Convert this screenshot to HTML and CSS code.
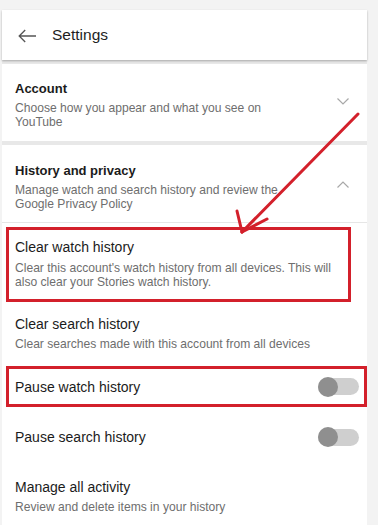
FILE: index.html
```html
<!DOCTYPE html>
<html lang="en">
<head>
<meta charset="utf-8">
<title>Settings</title>
<link rel="stylesheet" href="styles.css">
</head>
<body>
<div class="column">
  <header class="card topbar">
    <svg class="back" width="18" height="14" viewBox="0 0 18 14"><path d="M18 7H1.2M7.2 1L1.2 7l6 6" fill="none" stroke="#555" stroke-width="1.3"/></svg>
    <span class="page-title">Settings</span>
  </header>

  <section class="card group account">
    <div class="group-text">
      <div class="group-title">Account</div>
      <div class="desc">Choose how you appear and what you see on YouTube</div>
    </div>
    <svg class="chev down" width="12" height="7" viewBox="0 0 12 7"><polyline points="0.5,0.5 6,6 11.5,0.5" fill="none" stroke="#a8a8a8" stroke-width="1.2"/></svg>
  </section>

  <section class="card history">
    <div class="group history-head">
      <div class="group-text">
        <div class="group-title">History and privacy</div>
        <div class="desc">Manage watch and search history and review the Google Privacy Policy</div>
      </div>
      <svg class="chev up" width="12" height="7" viewBox="0 0 12 7"><polyline points="0.5,6.5 6,1 11.5,6.5" fill="none" stroke="#a8a8a8" stroke-width="1.2"/></svg>
    </div>

    <div class="item boxed box-clear">
      <div class="item-title">Clear watch history</div>
      <div class="desc item-desc">Clear this account's watch history from all devices. This will also clear your Stories watch history.</div>
    </div>

    <div class="item plain search-item">
      <div class="item-title">Clear search history</div>
      <div class="desc item-desc short">Clear searches made with this account from all devices</div>
    </div>

    <div class="item boxed toggle-row box-pause">
      <div class="item-title">Pause watch history</div>
      <span class="switch"><span class="knob"></span></span>
    </div>

    <div class="item toggle-row plain-toggle">
      <div class="item-title">Pause search history</div>
      <span class="switch"><span class="knob"></span></span>
    </div>

    <div class="item plain manage-item">
      <div class="item-title">Manage all activity</div>
      <div class="desc item-desc short">Review and delete items in your history</div>
    </div>
  </section>
</div>

<svg class="annotation" width="378" height="525" viewBox="0 0 378 525">
  <g fill="none" stroke="#d3202b" stroke-width="3" stroke-linecap="round">
    <line x1="358" y1="114" x2="242" y2="232"/>
    <line x1="242" y1="232" x2="237" y2="211"/>
    <line x1="242" y1="232" x2="267" y2="219"/>
  </g>
</svg>
</body>
</html>
```

FILE: styles.css
```css
* { box-sizing: border-box; }

html, body {
  margin: 0;
  padding: 0;
}

body {
  background: #f3f3f3;
  font-family: "Liberation Sans", Arial, sans-serif;
  color: #1b1b1b;
  width: 378px;
  height: 525px;
  overflow: hidden;
  position: relative;
}

.column {
  margin: 10px 0 0 2px;
  width: 365px;
  min-height: 515px;
  background: #e8e8e8;
  display: flex;
  flex-direction: column;
  gap: 4px;
}

.card {
  background: #ffffff;
}

.topbar {
  height: 50px;
  display: flex;
  align-items: center;
  padding-left: 16px;
  gap: 16px;
  box-shadow: 0 1px 2px rgba(0, 0, 0, 0.28);
  position: relative;
  z-index: 1;
}

.back {
  display: block;
  margin-top: 1px;
}

.page-title {
  font-size: 15.5px;
  color: #1e1e1e;
  line-height: 18px;
}

.group {
  display: flex;
  align-items: center;
  padding-left: 13px;
  padding-right: 18px;
}

.account {
  height: 77px;
  padding-top: 5px;
}

.group-text {
  flex: 1;
}

.group-title {
  font-size: 13px;
  font-weight: bold;
  line-height: 16px;
  color: #1b1b1b;
}

.desc {
  font-size: 12.1px;
  line-height: 14px;
  color: #6e6e6e;
  margin-top: 4px;
  max-width: 280px;
}

.chev {
  display: block;
  align-self: flex-start;
}

.chev.down {
  margin-top: 29px;
}

.chev.up {
  margin-top: 30px;
}

.history {
  flex: 1;
}

.history-head {
  height: 78px;
  padding-top: 6px;
  border-bottom: 1px solid #e6e6e6;
}

.item-title {
  font-size: 14px;
  line-height: 16px;
  color: #1b1b1b;
}

.item-desc {
  max-width: 330px;
  margin-top: 6px;
}

.item-desc.short {
  margin-top: 5px;
}

.boxed {
  border: 3px solid #d3202b;
  margin-left: 4px;
  padding-left: 6px;
}

.box-clear {
  margin-top: 4px;
  margin-right: 16px;
  padding-top: 9px;
  padding-bottom: 10px;
}

.plain {
  padding-left: 13px;
}

.search-item {
  padding-top: 14px;
}

.toggle-row {
  display: flex;
  align-items: center;
  justify-content: space-between;
}

.box-pause {
  margin-top: 15px;
  height: 41px;
  padding-right: 5px;
}

.plain-toggle {
  margin-top: 12px;
  height: 36px;
  padding-left: 13px;
  padding-right: 8px;
}

.manage-item {
  padding-top: 24px;
}

.switch {
  position: relative;
  width: 41px;
  height: 17px;
  border-radius: 9px;
  background: #cfcfcf;
  display: block;
}

.knob {
  position: absolute;
  left: 0;
  top: -1.5px;
  width: 20px;
  height: 20px;
  border-radius: 50%;
  background: #8f8f8f;
}

.annotation {
  position: absolute;
  left: 0;
  top: 0;
  pointer-events: none;
}
```
